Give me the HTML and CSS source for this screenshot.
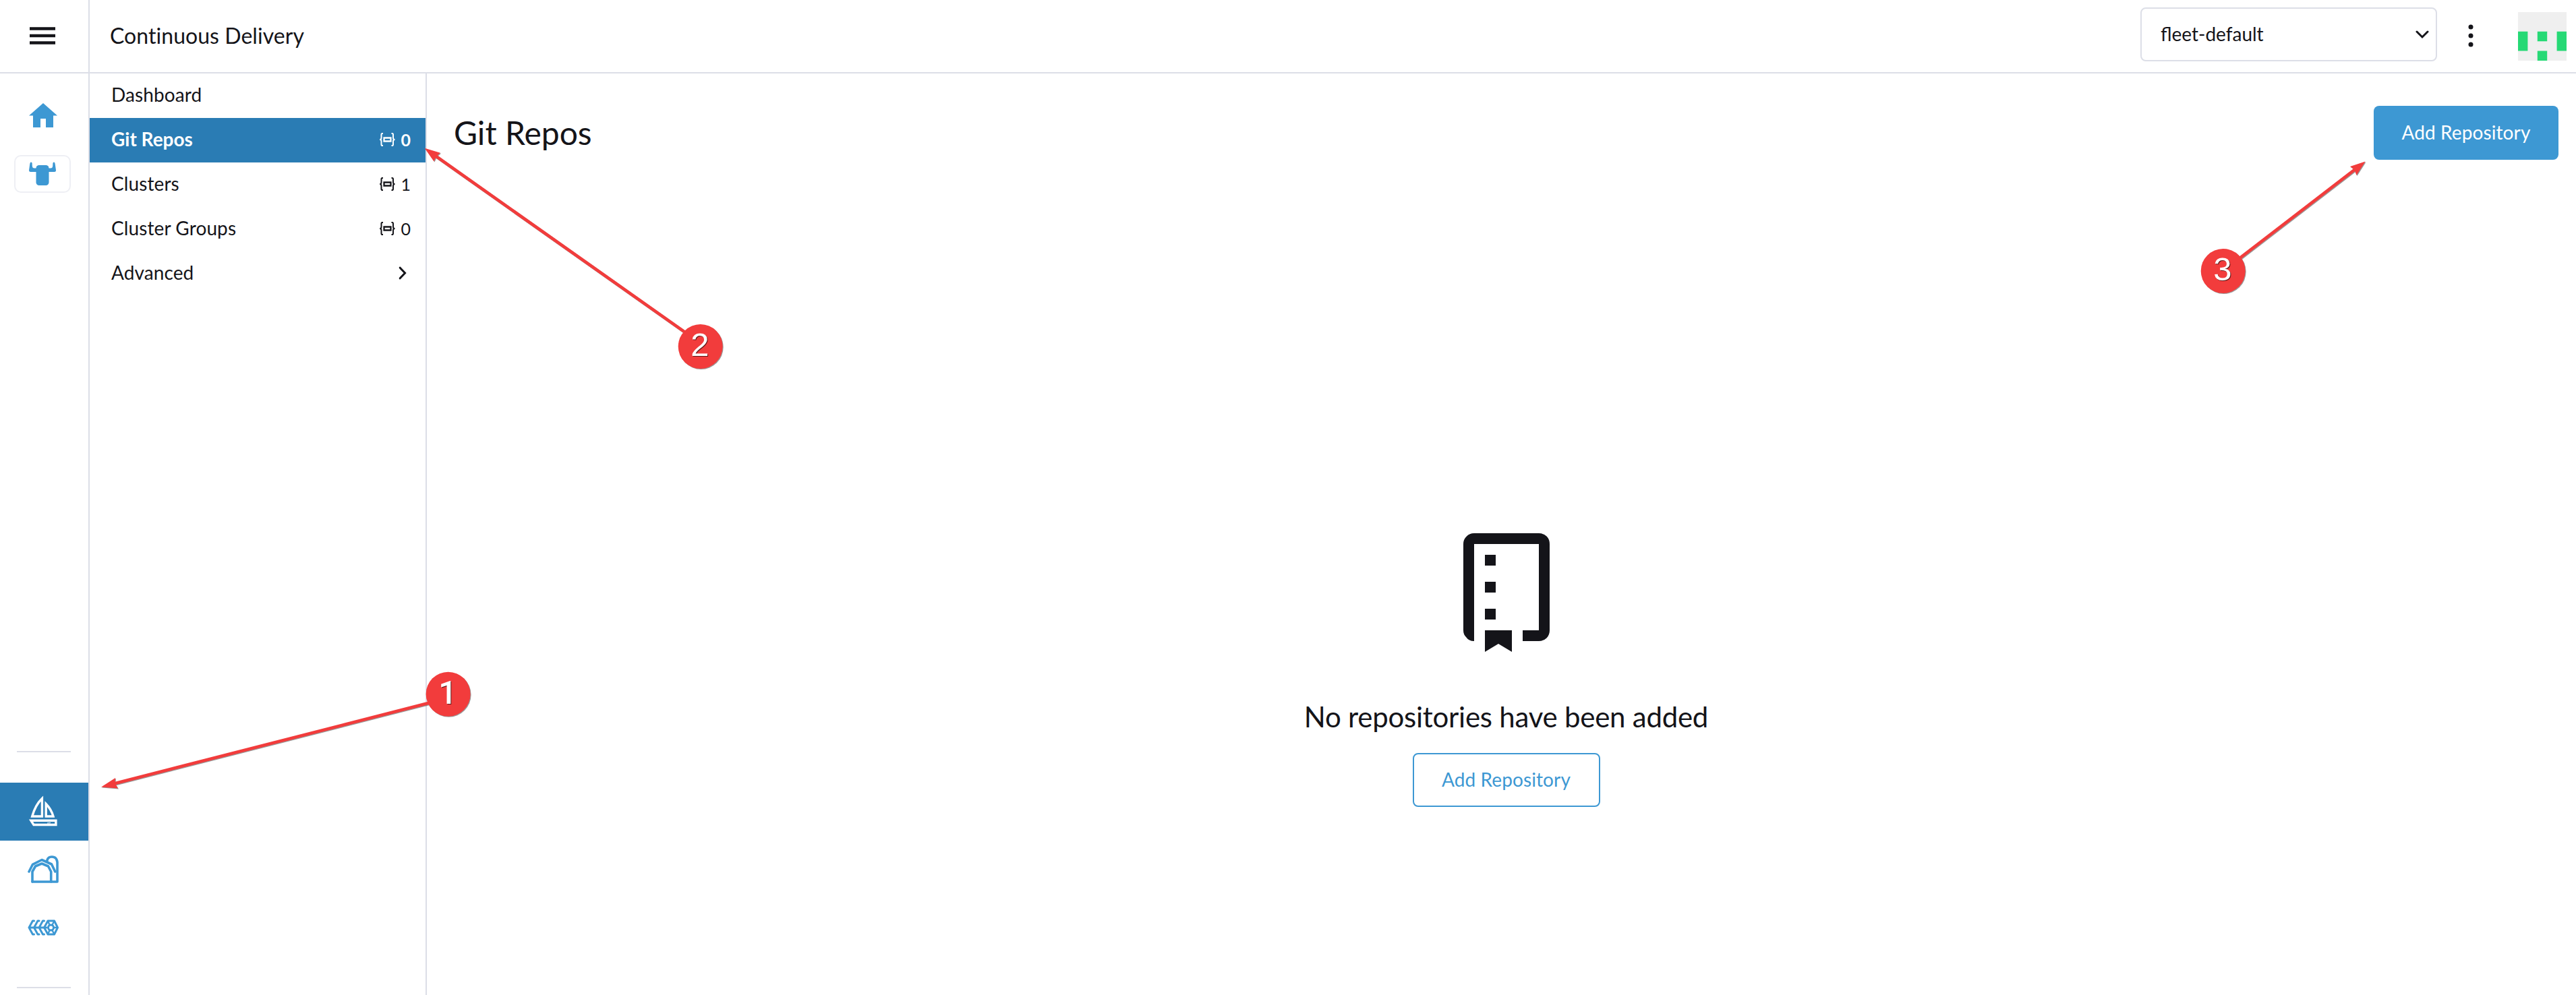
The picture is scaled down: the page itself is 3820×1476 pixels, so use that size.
FILE: index.html
```html
<!DOCTYPE html>
<html lang="en">
<head>
<meta charset="utf-8">
<title>Continuous Delivery</title>
<link rel="stylesheet" href="styles.css">
</head>
<body>
<div class="app">
  <header class="topbar">
    <button class="menu" aria-label="Menu">
      <svg width="38" height="26" viewBox="0 0 38 26"><path d="M0 0.2h38v4.6H0zM0 10.7h38v4.6H0zM0 21.2h38v4.6H0z" fill="#141419"/></svg>
    </button>
    <div class="product">Continuous Delivery</div>
    <div class="workspace">
      <span>fleet-default</span>
      <svg width="20" height="14" viewBox="0 0 20 14"><path d="M2 3l8 8 8-8" fill="none" stroke="#141419" stroke-width="3" stroke-linecap="round"/></svg>
    </div>
    <svg class="kebab" width="8" height="36" viewBox="0 0 8 36" fill="#141419"><circle cx="4" cy="5" r="3.5"/><circle cx="4" cy="18" r="3.5"/><circle cx="4" cy="31" r="3.5"/></svg>
    <svg class="avatar" width="72" height="72" viewBox="0 0 72 72"><path d="M0 0h72v72H0z" fill="#efefef"/><path d="M0 28.8h14.4v28.8H0zM57.6 28.8H72v28.8H57.6zM28.8 28.8h14.4v14.4H28.8zM28.8 57.6h14.4V72H28.8z" fill="#26d975"/></svg>
  </header>

  <nav class="rail">
    <a class="rail-home">
      <svg width="42" height="36" viewBox="0 0 42 36"><path d="M21 0L42 18.6H36V36H25V23H17V36H6V18.6H0z" fill="#3d98d3"/></svg>
    </a>
    <a class="rail-cluster">
      <svg width="40" height="36" viewBox="0 0 40 36" fill="#3d98d3"><path d="M3 1.5Q1.6 1.5 1.2 5L0 13.5Q0 16 2.5 16H11V10.5H8Q5 10.5 4.8 7L4.6 3Q4.4 1.5 3 1.5zM37 1.5Q38.4 1.5 38.8 5L40 13.5Q40 16 37.5 16H29V10.5H32Q35 10.5 35.2 7L35.4 3Q35.6 1.5 37 1.5z"/><rect x="10.5" y="6" width="19" height="30" rx="4.5"/></svg>
    </a>
    <div class="rail-rule rail-rule-top"></div>
    <a class="rail-item rail-item-active">
      <svg width="42" height="47" viewBox="0 0 42 47" fill="none" stroke="#fff" stroke-width="3.4"><path d="M19.4 5.500V32H4.700Q9.500 15 19.400 5.500zM25.200 13.500V32H36Q33 21.500 25.200 13.500z"/><path d="M3 38.300H39.900V44.500H7z"/><path d="M27 42L32 41.600" stroke-width="1"/></svg>
    </a>
    <a class="rail-item">
      <svg width="46" height="42" viewBox="0 0 46 42" fill="none" stroke="#3d98d3" stroke-width="3.6" stroke-linejoin="round" stroke-linecap="round"><path d="M2 24L7.500 13.300L21 6.500L35.500 13L40.800 24"/><path d="M7 39V24L11.500 16L21 12L30.500 16L34.700 24V39"/><path d="M7 39H44V10Q43 2 36 2Q29.500 2 28.500 9"/></svg>
    </a>
    <a class="rail-item">
      <svg width="46" height="24" viewBox="0 0 46 24" fill="none" stroke="#3d98d3" stroke-width="3" stroke-linecap="round" stroke-linejoin="round"><path d="M9.500 2H7.500L2 12L7.500 22H9.500M17 2H15L9.500 12L15 22H17M24.500 2H22.500L17 12L22.500 22H24.500M2 12H28"/><path d="M24.500 12L30 2H39.500L44.500 12L39.500 22H30z"/><circle cx="34.500" cy="12" r="4"/><path d="M30 2L32.500 8M39.500 2L36.500 8M44 12H39M39.500 22L36.500 16M30 22L32.500 16" stroke-width="2.400"/></svg>
    </a>
    <div class="rail-rule rail-rule-bottom"></div>
  </nav>

  <aside class="sidebar">
    <a class="nav-row">Dashboard</a>
    <a class="nav-row nav-row-active">Git Repos
      <span class="count"><svg width="23" height="20" viewBox="0 0 23 20"><use href="#ns"/></svg>0</span>
    </a>
    <a class="nav-row">Clusters
      <span class="count"><svg width="23" height="20" viewBox="0 0 23 20"><use href="#ns"/></svg>1</span>
    </a>
    <a class="nav-row">Cluster Groups
      <span class="count"><svg width="23" height="20" viewBox="0 0 23 20"><use href="#ns"/></svg>0</span>
    </a>
    <a class="nav-row">Advanced
      <svg class="chevron" width="12" height="20" viewBox="0 0 12 20"><path d="M2.200 2.200L9.600 10L2.200 17.800" fill="none" stroke="#141419" stroke-width="3" stroke-linecap="round"/></svg>
    </a>
  </aside>

  <main class="content">
    <div class="page-head">
      <h1>Git Repos</h1>
      <button class="btn btn-primary">Add Repository</button>
    </div>
    <section class="empty">
      <svg width="128" height="176" viewBox="0 0 128 176" fill="#141419"><path d="M16 160Q8 160 4 154Q0 150 0 144V16Q0 9 5 4.500Q9 0 16 0H112Q119 0 123.500 4.500Q128 9 128 16V144Q128 151 123.500 155.500Q119 160 112 160H88V144H112V16H16z"/><path d="M32 32h16v16H32zM32 72h16v16H32zM32 112h16v16H32zM32 144H72V176L52 164L32 176z"/></svg>
      <h2>No repositories have been added</h2>
      <button class="btn btn-outline">Add Repository</button>
    </section>
  </main>
</div>

<svg class="callouts" width="3820" height="1476" viewBox="0 0 3820 1476">
  <defs>
    <g id="ns" fill="none" stroke="currentColor" stroke-width="2"><path d="M5 1H4Q2.500 1 2.500 2.800V7.500Q2.500 10 0.200 10Q2.500 10 2.500 12.500V17.200Q2.500 19 4 19H5M17.500 1H18.500Q20 1 20 2.800V7.500Q20 10 22.500 10Q20 10 20 12.500V17.200Q20 19 18.500 19H17.500"/><path d="M6.500 7.500H16.500V12.500H6.500z" stroke-width="2.300"/></g>
  </defs>
  <g class="arrow">
    <path d="M168 1162.700L636 1042.800"/>
    <path class="head" d="M150 1167.500L171 1154L170.500 1162L175 1169.500z"/>
    <circle cx="664.600" cy="1029.700" r="33"/>
  </g>
  <g class="arrow">
    <path d="M645 230.700L1038.700 509"/>
    <path class="head" d="M629.700 219.700L653 226.700L647 232L643.500 239.500z"/>
    <circle cx="1038.700" cy="514" r="33"/>
  </g>
  <g class="arrow">
    <path d="M3492 251.500L3296.700 402"/>
    <path class="head" d="M3507.600 239.500L3485 247L3491.500 252L3494.500 260z"/>
    <circle cx="3296.700" cy="402" r="33"/>
  </g>
  <g class="digits">
    <text class="digit-one" x="664" y="1043.500">1</text>
    <text x="1038" y="527.500">2</text>
    <text x="3296" y="416">3</text>
  </g>
</svg>
</body>
</html>
```
FILE: styles.css
```css
* { box-sizing: border-box; }

body {
  margin: 0;
  background: #fff;
  color: #141419;
  font: 28px/1.2 Lato, sans-serif;
}

button { font: inherit; color: inherit; background: none; border: 0; padding: 0; }

h1, h2 { margin: 0; font-weight: 400; }

svg { display: block; flex: none; }

.app {
  display: grid;
  grid-template: 109px 1fr / 133px 500px 1fr;
  height: 1476px;
  overflow: hidden;
}

.topbar {
  grid-column: 1 / -1;
  display: flex;
  align-items: center;
  border-bottom: 2px solid #dcdee7;
  padding-right: 14px;
}

.menu {
  width: 133px;
  height: 107px;
  padding: 0 0 1px 44px;
  border-right: 2px solid #dcdee7;
}

.product { font-size: 32px; letter-spacing: 0.05px; padding-left: 30px; flex: 1; }

.workspace {
  display: flex;
  align-items: center;
  justify-content: space-between;
  width: 440px;
  height: 80px;
  margin-bottom: 5px;
  padding: 0 10px 0 28px;
  border: 2px solid #dcdee7;
  border-radius: 8px;
}

.kebab { margin: 0 66px 1px 46px; }

.rail {
  display: flex;
  flex-direction: column;
  border-right: 2px solid #dcdee7;
}

.rail-home { padding: 44px 0 0 43px; }

.rail-cluster {
  width: 84px;
  height: 56px;
  margin: 41px 0 0 21px;
  padding: 7px 0 0 20px;
  border: 2px solid #eeeff4;
  border-radius: 10px;
}

.rail-rule { width: 80px; height: 2px; margin-left: 25px; background: #dcdee7; }
.rail-rule-top { margin-top: auto; margin-bottom: 45px; }
.rail-rule-bottom { margin: 45px 0 10px 25px; }

.rail-item {
  display: flex;
  align-items: center;
  height: 86px;
  padding-left: 41px;
}

.rail-item-active { background: #2a7cb4; padding: 0 0 3px 43px; }

.sidebar { border-right: 2px solid #dcdee7; }

.nav-row {
  display: flex;
  align-items: center;
  justify-content: space-between;
  height: 66px;
  padding: 0 22px 2px 32px;
  letter-spacing: 0.1px;
}

.nav-row-active { background: #2a7cb4; color: #fff; font-weight: 700; letter-spacing: 0; }

.count { display: flex; align-items: center; gap: 8px; font-size: 25px; }

.chevron { margin-right: 6px; }

.content {
  display: flex;
  flex-direction: column;
  padding: 48px 26px 0 40px;
}

.page-head { display: flex; align-items: center; justify-content: space-between; height: 80px; }

h1 { font-size: 48px; }

.btn { height: 80px; border-radius: 8px; letter-spacing: 0.1px; }
.btn-primary { width: 274px; background: #3d98d3; color: #fff; }
.btn-outline { width: 278px; border: 2px solid #3d98d3; color: #3d98d3; }

.empty {
  display: flex;
  flex-direction: column;
  align-items: center;
  padding-top: 554px;
}

h2 { font-size: 42px; line-height: 50px; margin: 71px 0 29px; letter-spacing: -0.25px; }

.callouts { position: absolute; top: 0; left: 0; pointer-events: none; }

.arrow { fill: #f23c3c; filter: drop-shadow(1px 1px 0.6px rgba(0, 0, 0, 0.4)); }
.arrow path { stroke: #f23c3c; stroke-width: 4.6px; }
.arrow .head { stroke: none; }

.digits {
  fill: #fff;
  font: 49px "Liberation Sans", sans-serif;
  text-anchor: middle;
  filter: drop-shadow(1px 1px 0.6px rgba(0, 0, 0, 0.6));
}

.digit-one { font: 500 48px Roboto, sans-serif; }
```
